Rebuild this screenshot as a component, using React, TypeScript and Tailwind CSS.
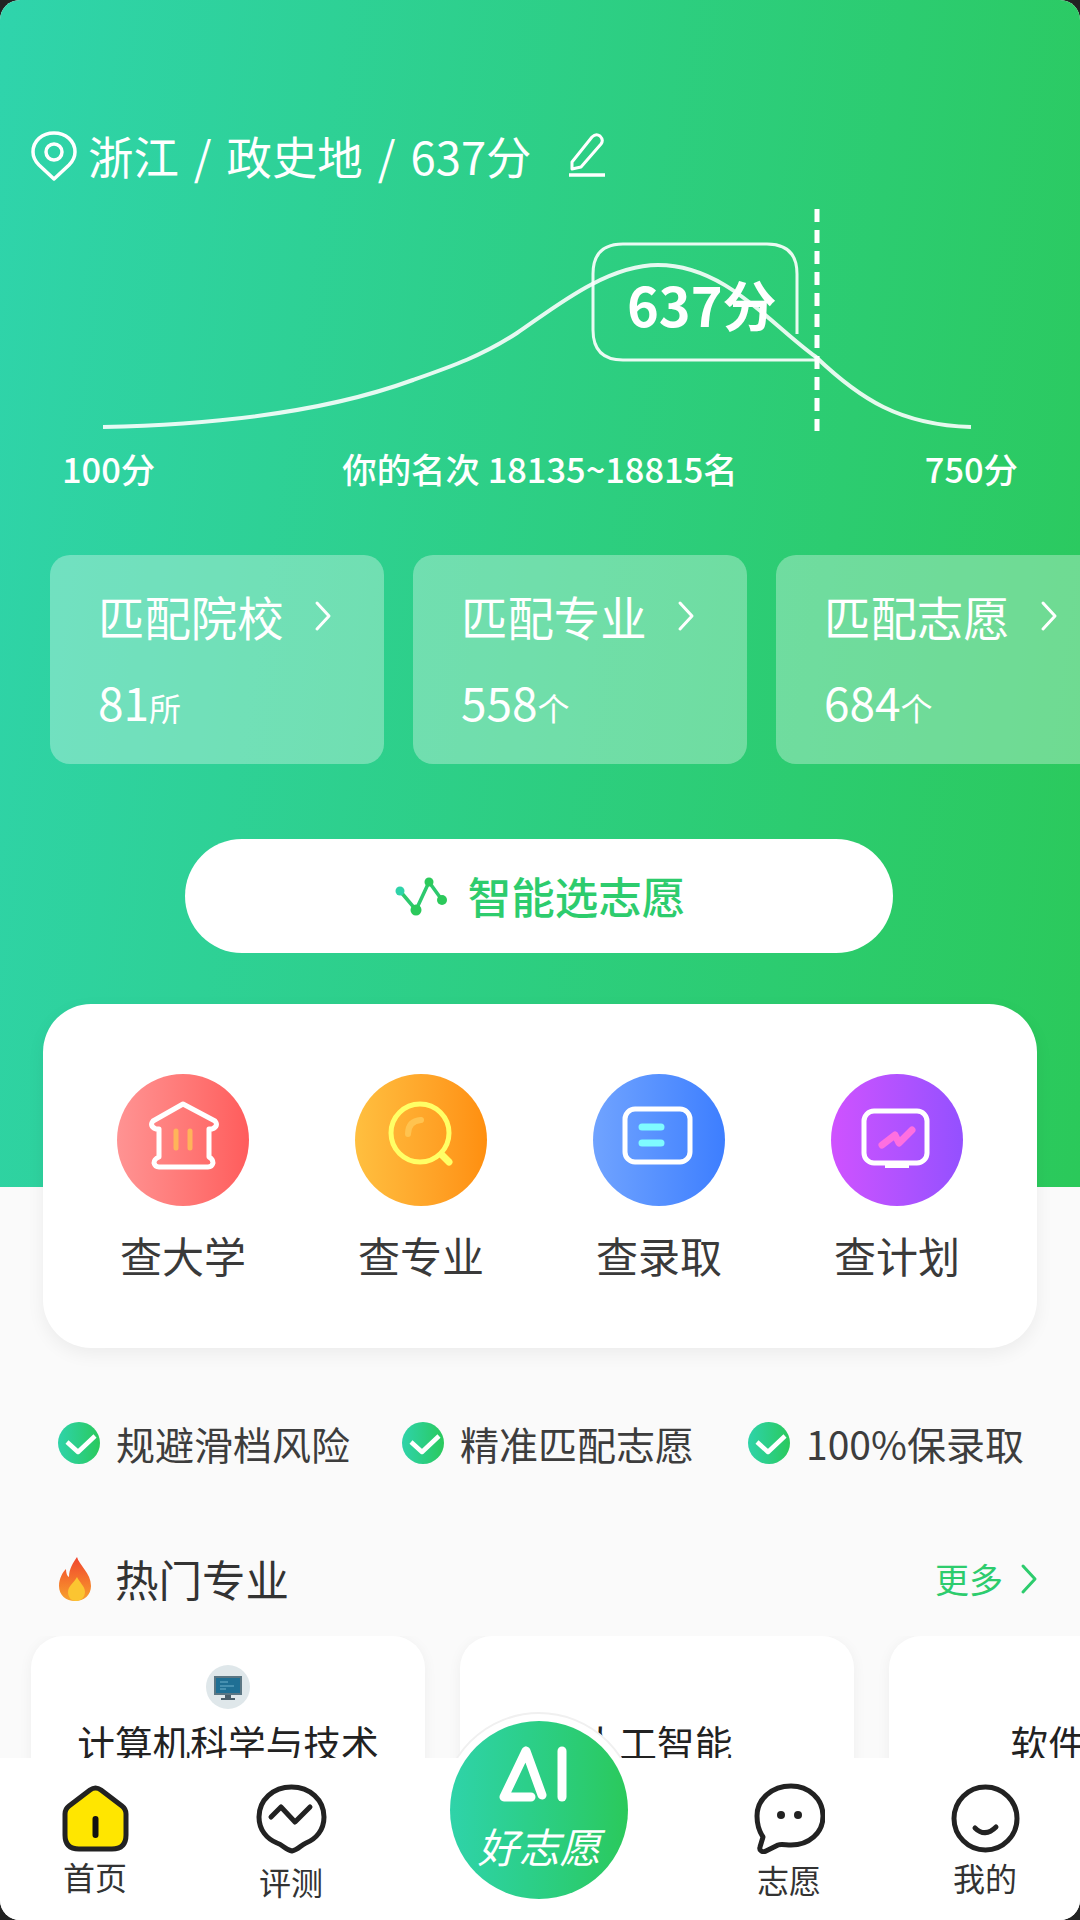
import React from "react";

const matchCards = [
  { title: "匹配院校", num: "81", unit: "所" },
  { title: "匹配专业", num: "558", unit: "个" },
  { title: "匹配志愿", num: "684", unit: "个" },
];

const perks = ["规避滑档风险", "精准匹配志愿", "100%保录取"];

const Chevron = ({ className }: { className: string }) => (
  <svg viewBox="0 0 18 32" fill="none" stroke="currentColor" strokeWidth="3" strokeLinecap="round" strokeLinejoin="round" className={className}>
    <path d="M3 3 L15 16 L3 29" />
  </svg>
);

const ToolIcon = ({ name }: { name: string }) => {
  if (name === "uni") {
    return (
      <svg viewBox="0 0 132 132" fill="none" className="w-[132px] h-[132px]">
        <path d="M66 30 L98 47 Q102 52 95 55 L92 55 V83 Q96 85 96 89 Q95 93 91 93 H42 Q38 93 37 89 Q37 85 42 83 V55 L39 55 Q32 52 36 47 Z" stroke="#fff" strokeWidth="5" strokeLinejoin="round" />
        <path d="M59 57 V74 M73 57 V74" stroke="#ffb45a" strokeWidth="5" strokeLinecap="round" />
      </svg>
    );
  }
  if (name === "major") {
    return (
      <svg viewBox="0 0 132 132" fill="none" className="w-[132px] h-[132px]">
        <path d="M53 60 Q53 47 66 46" stroke="#ffc34f" strokeWidth="6" strokeLinecap="round" />
        <circle cx="65" cy="59" r="29" stroke="#ffff66" strokeWidth="5" />
        <path d="M87 81 L94 88" stroke="#ffff66" strokeWidth="7" strokeLinecap="round" />
      </svg>
    );
  }
  if (name === "admit") {
    return (
      <svg viewBox="0 0 132 132" fill="none" className="w-[132px] h-[132px]">
        <rect x="32" y="35" width="65" height="53" rx="10" stroke="#fff" strokeWidth="5" />
        <path d="M49 53 H68 M49 69 H68" stroke="#7ffbff" strokeWidth="7" strokeLinecap="round" />
      </svg>
    );
  }
  return (
    <svg viewBox="0 0 132 132" fill="none" className="w-[132px] h-[132px]">
      <path d="M54 90 H78 V94 H54 Z" fill="#fff" />
      <rect x="33" y="37" width="63" height="52" rx="10" stroke="#fff" strokeWidth="5" />
      <path d="M51 71 L64 61 L68 69 L81 56" stroke="#ff6fe0" strokeWidth="7" strokeLinecap="round" strokeLinejoin="round" />
    </svg>
  );
};

const tools = [
  { key: "uni", label: "查大学", bg: "bg-linear-to-r from-[#ff9393] to-[#ff5c5c]" },
  { key: "major", label: "查专业", bg: "bg-linear-to-r from-[#ffbf3f] to-[#ff8f0e]" },
  { key: "admit", label: "查录取", bg: "bg-linear-to-r from-[#70a3ff] to-[#3d7eff]" },
  { key: "plan", label: "查计划", bg: "bg-linear-to-r from-[#cf52ff] to-[#9450ff]" },
];

const CheckBadge = () => (
  <div className="w-[42px] h-[42px] rounded-full bg-linear-to-r from-[#2fd3a9] to-[#2bc95b] shrink-0">
    <svg viewBox="0 0 42 42" fill="none" className="w-[42px] h-[42px]">
      <path d="M9 20 L20 30 L37 14" stroke="#fff" strokeWidth="4.5" strokeLinejoin="round" />
    </svg>
  </div>
);

const Flame = () => (
  <svg viewBox="0 0 35 44" className="w-[35px] h-[44px] shrink-0">
    <defs>
      <linearGradient id="flame" x1="0" y1="0" x2="0" y2="1">
        <stop offset="0" stopColor="#f0452f" />
        <stop offset="0.55" stopColor="#f5772c" />
        <stop offset="1" stopColor="#f7a32e" />
      </linearGradient>
    </defs>
    <path d="M19 0 C21 8 33 16 33 29 C33 38 26 44 17 44 C8 44 1 38 1 29 C1 21 5 15 8 12 C8 16 9 19 11 20 C11 12 15 6 19 0 Z" fill="url(#flame)" />
    <path d="M19 20 C21 25 27 29 27 35 C27 40 23 44 18 44 C13 44 10 40 10 35 C10 29 16 26 19 20 Z" fill="#fbc531" />
  </svg>
);

const PcIcon = () => (
  <svg viewBox="0 0 44 44" className="w-[44px] h-[44px]">
    <circle cx="22" cy="22" r="22" fill="#dfe7ea" />
    <rect x="8" y="11" width="28" height="19" fill="#5b7683" />
    <rect x="10" y="13" width="24" height="15" fill="#1f6f94" />
    <path d="M14 17 H22 M14 21 H28 M14 24 H20" stroke="#6fb2cc" strokeWidth="1.2" />
    <path d="M19 30 H25 V33 H29 V35 H15 V33 H19 Z" fill="#4a5f6b" />
  </svg>
);

const HomeIcon = () => (
  <svg viewBox="0 0 67 67" fill="none" className="w-[67px] h-[67px]">
    <path d="M28 5 Q33.5 1 39 5 L60 21 Q64 24 64 29 V50 Q64 64 50 64 H17 Q3 64 3 50 V29 Q3 24 7 21 Z" fill="#ffe600" stroke="#222" strokeWidth="5" strokeLinejoin="round" />
    <path d="M33.5 34 V50" stroke="#111" strokeWidth="6" strokeLinecap="round" />
  </svg>
);

const TestIcon = () => (
  <svg viewBox="0 0 71 70" fill="none" className="w-[71px] h-[70px]">
    <path d="M35.5 3 C54 3 68 16 68 33 C68 46 60 55 50 59 C45 61 42 66 36 67 C30 66 27 61 21 59 C11 55 3 46 3 33 C3 16 17 3 35.5 3 Z" stroke="#222" strokeWidth="5" strokeLinejoin="round" />
    <path d="M15 33 L25 23 L39 38 L54 23" stroke="#222" strokeWidth="5" strokeLinecap="round" strokeLinejoin="round" />
  </svg>
);

const ChatIcon = () => (
  <svg viewBox="0 0 71 71" fill="none" className="w-[71px] h-[71px]">
    <path d="M37 3 C55 3 69 16 69 33 C69 50 55 62 37 62 C32 62 27 61 24 62 L12 68 C8 70 5 67 6 64 L9 54 C5 48 3 41 3 33 C3 16 18 3 37 3 Z" stroke="#222" strokeWidth="5" strokeLinejoin="round" />
    <circle cx="27" cy="32" r="4" fill="#222" />
    <circle cx="44" cy="32" r="4" fill="#222" />
  </svg>
);

const MineIcon = () => (
  <svg viewBox="0 0 69 69" fill="none" className="w-[69px] h-[69px]">
    <circle cx="34.5" cy="34.5" r="31.5" stroke="#222" strokeWidth="5" />
    <path d="M24 44 Q34 54 45 43" stroke="#222" strokeWidth="5" strokeLinecap="round" />
  </svg>
);

const NavItem = ({ icon, label, labelClass }: { icon: React.ReactNode; label: string; labelClass: string }) => (
  <div className="w-[190px] flex flex-col items-center">
    <div className="h-[67px] flex items-center">{icon}</div>
    <span className={`text-[32px] leading-[40px] text-[#333] ${labelClass}`}>{label}</span>
  </div>
);

export default function App() {
  return (
    <div className="w-[1080px] h-[1920px] bg-[#222] font-['Noto_Sans_CJK_SC',sans-serif]">
      <div className="relative w-[1080px] h-[1920px] rounded-[20px] overflow-hidden bg-[#fafafa]">

        {/* Hero */}
        <div className="bg-linear-[98deg] from-[#2fd4ac] to-[#2bc95a] h-[1187px] pt-[125px] text-white">
          <div className="flex items-center pl-[31px] h-[60px]">
            <svg viewBox="0 0 46 50" fill="none" stroke="#fff" strokeWidth="3.5" className="w-[46px] h-[50px] shrink-0 mt-[2px]">
              <path d="M23 48 L8 34 C4 30 2 26 2 21 C2 10 11 2 23 2 C35 2 44 10 44 21 C44 26 42 30 38 34 Z" strokeLinejoin="round" />
              <circle cx="23" cy="21" r="8" />
            </svg>
            <div className="ml-[11px] flex gap-[15px] text-[45.4px] leading-[60px] whitespace-nowrap">
              <span>浙江</span>
              <span>/</span>
              <span>政史地</span>
              <span>/</span>
              <span>637分</span>
            </div>
            <svg viewBox="0 0 38 44" fill="none" stroke="#fff" strokeWidth="3" className="ml-[36px] w-[38px] h-[44px] shrink-0">
              <path d="M4 29 L24 4 Q28 0 32 3 Q36 7 33 11 L13 34 L4 36 Z" strokeLinejoin="round" />
              <path d="M1 42 H37" strokeWidth="3.5" />
            </svg>
          </div>

          {/* Score curve */}
          <div className="relative mt-[24px] h-[222px]">
            <svg viewBox="0 0 1080 222" fill="none" className="block w-[1080px] h-[222px]">
              <path d="M817 151 H623 Q593 151 593 121 V65 Q593 35 623 35 H767 Q797 35 797 65 V125" stroke="#fff" strokeOpacity="0.9" strokeWidth="3" />
              <path d="M103 218 C200 216 320 205 413 171 C450 158 482 147 517 124 C550 102 605 56 658 56 C725 56 770 115 816 148 C860 190 900 216 971 218" stroke="#fff" strokeOpacity="0.88" strokeWidth="4" />
              <path d="M817 0 V222" stroke="#fff" strokeWidth="5" strokeDasharray="13 8" />
            </svg>
            <span className="absolute left-[627px] top-[58px] text-[54px] leading-[74px] font-bold">637分</span>
          </div>

          <div className="mt-[14px] flex justify-between px-[62px] text-[34.4px] leading-[46px] font-medium">
            <span>100分</span>
            <span>你的名次 18135~18815名</span>
            <span>750分</span>
          </div>

          {/* Match cards */}
          <div className="mt-[64px] flex gap-[29px] pl-[50px] overflow-hidden">
            {matchCards.map((c) => (
              <div key={c.title} className="w-[334px] h-[209px] shrink-0 rounded-[20px] bg-white/32 pl-[48px] pt-[31px]">
                <div className="flex items-center h-[60px]">
                  <span className="text-[46.4px] leading-[60px]">{c.title}</span>
                  <Chevron className="ml-[30px] w-[18px] h-[32px]" />
                </div>
                <div className="mt-[25px] leading-[60px] flex items-baseline">
                  <span className="text-[46px]">{c.num}</span>
                  <span className="text-[32px]">{c.unit}</span>
                </div>
              </div>
            ))}
          </div>

          <div className="mt-[75px] ml-[185px] w-[708px] h-[114px] rounded-full bg-white flex items-center justify-center text-[#2dcc6d]">
            <svg viewBox="0 0 54 50" fill="none" className="w-[54px] h-[50px] shrink-0">
              <path d="M7 20 L23 39 L36 11 L49 29" stroke="#2dc96e" strokeWidth="3.5" />
              <circle cx="7" cy="20" r="4.5" fill="#2fd3a9" />
              <circle cx="23" cy="39" r="5.5" fill="#2bc95b" />
              <circle cx="36" cy="11" r="4.5" fill="#2bc95b" />
              <circle cx="49" cy="29" r="5" fill="#2bc95b" />
            </svg>
            <span className="ml-[21px] text-[43.5px] font-medium leading-[60px]">智能选志愿</span>
          </div>
        </div>

        {/* Tools card */}
        <div className="relative mt-[-183px] mx-[43px] rounded-[48px] bg-white shadow-[0_6px_18px_rgba(0,0,0,0.06)] px-[21px] pt-[70px] pb-[63px] grid grid-cols-4">
          {tools.map((t) => (
            <div key={t.key} className="flex flex-col items-center">
              <div className={`w-[132px] h-[132px] rounded-full ${t.bg}`}>
                <ToolIcon name={t.key} />
              </div>
              <span className="mt-[19px] text-[42px] leading-[60px] text-[#3a3a3a]">{t.label}</span>
            </div>
          ))}
        </div>

        {/* Promises */}
        <div className="mt-[67px] pl-[58px] flex gap-[52px]">
          {perks.map((p, i) => (
            <div key={p} className={`flex items-center gap-[16px] h-[56px] ${i === 2 ? "ml-[2px]" : ""}`}>
              <CheckBadge />
              <span className="text-[39px] leading-[56px] text-[#3d3d3d] whitespace-nowrap">{p}</span>
            </div>
          ))}
        </div>

        {/* Popular majors */}
        <div className="mt-[78px] flex items-center justify-between pl-[58px] pr-[42px] h-[60px]">
          <div className="flex items-center gap-[22px]">
            <Flame />
            <span className="text-[43.5px] leading-[60px] text-[#333]">热门专业</span>
          </div>
          <div className="flex items-center gap-[17px] text-[#2dcc6d]">
            <span className="text-[34px] leading-[46px]">更多</span>
            <Chevron className="w-[18px] h-[36px]" />
          </div>
        </div>

        <div className="mt-[27px] flex gap-[35px] pl-[31px] overflow-hidden pb-[20px]">
          <div className="w-[394px] h-[240px] shrink-0 rounded-[32px] bg-white shadow-[0_2px_14px_rgba(0,0,0,0.05)] pt-[29px] flex flex-col items-center">
            <PcIcon />
            <span className="mt-[8px] text-[37.7px] leading-[50px] text-[#222] whitespace-nowrap">计算机科学与技术</span>
          </div>
          <div className="w-[394px] h-[240px] shrink-0 rounded-[32px] bg-white shadow-[0_2px_14px_rgba(0,0,0,0.05)] pt-[81px] flex flex-col items-center">
            <span className="text-[37.7px] leading-[50px] text-[#222]">人工智能</span>
          </div>
          <div className="w-[394px] h-[240px] shrink-0 rounded-[32px] bg-white shadow-[0_2px_14px_rgba(0,0,0,0.05)] pt-[81px] flex flex-col items-center">
            <span className="text-[37.7px] leading-[50px] text-[#222]">软件工程</span>
          </div>
        </div>

        {/* Bottom nav */}
        <div className="absolute left-[441px] top-[1712px] w-[196px] h-[196px] rounded-full bg-white border-2 border-[#f0f0f0]" />
        <div className="absolute left-0 right-0 bottom-0 h-[162px] bg-white pt-[27px] flex justify-between">
          <div className="flex gap-[6px]">
            <NavItem icon={<HomeIcon />} label="首页" labelClass="mt-[4px]" />
            <NavItem icon={<TestIcon />} label="评测" labelClass="mt-[9px]" />
          </div>
          <div className="flex gap-[6px]">
            <NavItem icon={<ChatIcon />} label="志愿" labelClass="mt-[7px]" />
            <NavItem icon={<MineIcon />} label="我的" labelClass="mt-[5px]" />
          </div>
        </div>
        <div className="absolute left-[450px] top-[1721px] w-[178px] h-[178px] rounded-full bg-linear-to-r from-[#2fd3a9] to-[#2bc95b] flex flex-col items-center pt-[24px] text-white">
          <svg viewBox="0 0 80 60" fill="none" stroke="#fff" strokeWidth="9" strokeLinecap="round" strokeLinejoin="round" className="w-[80px] h-[60px]">
            <path d="M27 6 L5 52 H32 M27 6 L43 50" />
            <path d="M63 6 V52" />
          </svg>
          <span className="mt-[15px] text-[41px] leading-[50px] italic">好志愿</span>
        </div>
      </div>
    </div>
  );
}
